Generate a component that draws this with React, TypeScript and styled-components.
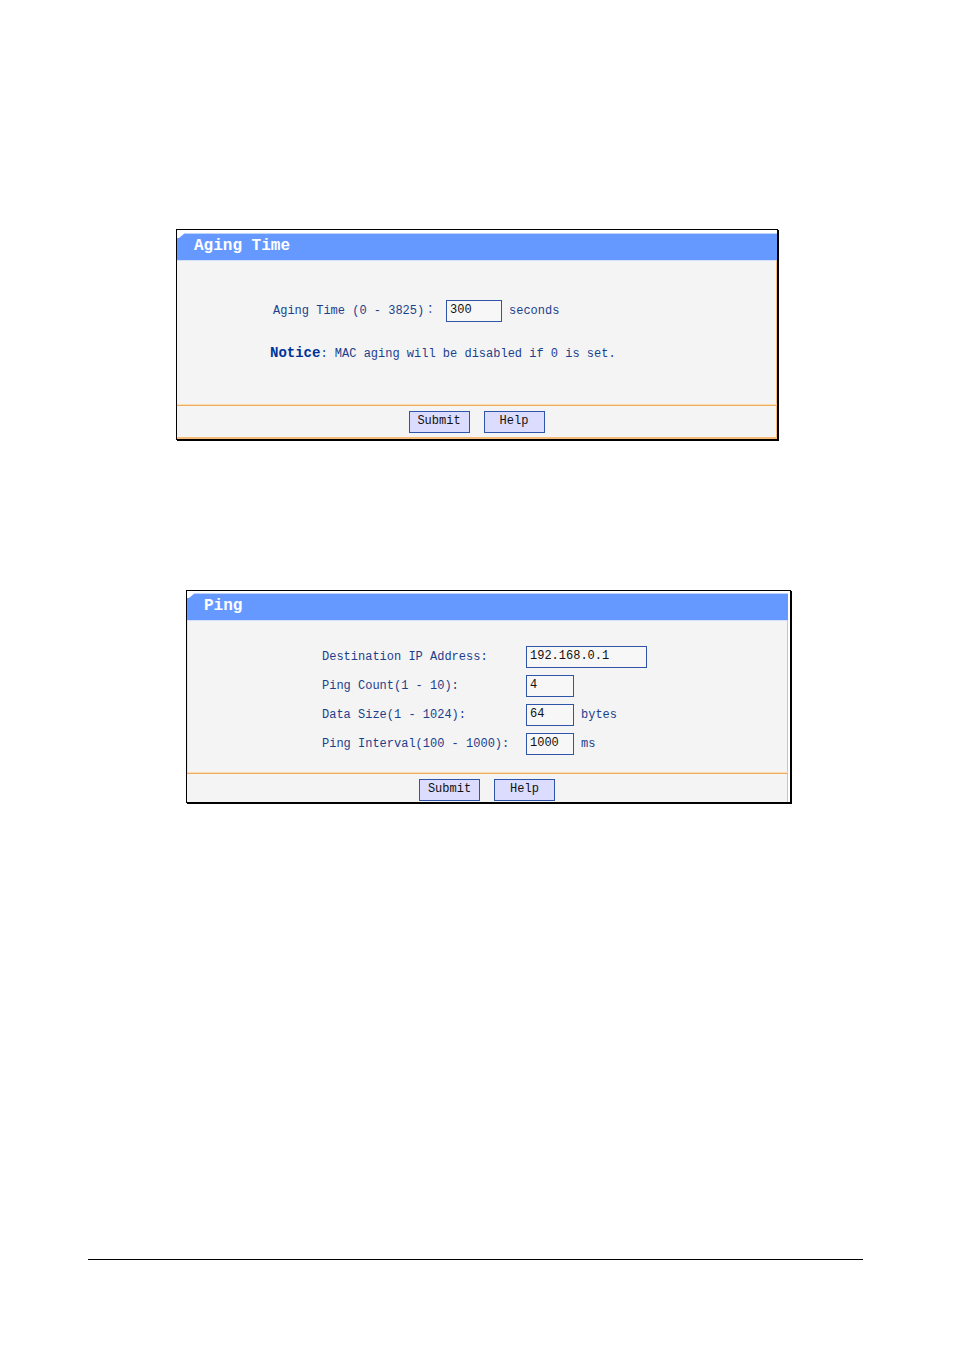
import React from "react";
import styled, { createGlobalStyle } from "styled-components";

const GlobalStyle = createGlobalStyle`
  *, *::before, *::after { box-sizing: border-box; }
  body {
    margin: 0;
    background: #fff;
    color: #1c3f8c;
    font-family: "Liberation Mono", "Noto Sans CJK JP", monospace;
    font-size: 12px;
    line-height: 22px;
  }
`;

const Page = styled.main`
  padding: 229px 91px 90px 88px;
`;

const Panel = styled.form`
  margin: 0 85px 0 88px;
  padding-top: 3px;
  background: #fff;
  border: 1px solid #000;
  box-shadow: 1px 1px 0 #000;
`;

const PingPanel = styled(Panel)`
  margin: 150px 72px 0 98px;
  padding: 2px 2px 0 0;
`;

const PanelTitle = styled.h2`
  margin: 0;
  padding-left: 17px;
  height: 27px;
  border-top: 1px solid #bfd5ff;
  background: #6699ff;
  clip-path: polygon(0 5px, 2px 5px, 8px 0, 100% 0, 100% 100%, 0 100%);
  color: #fff;
  font-size: 16px;
  font-weight: bold;
  line-height: 24px;
`;

const PanelBody = styled.div<{ $leftEdge?: boolean }>`
  display: flex;
  flex-direction: column;
  border-top: 1px solid #d3e1fb;
  border-right: 1px solid #f8bd74;
  border-left: ${(p) => (p.$leftEdge ? "1px solid #fde0b8" : "0")};
  background: #f4f4f4;
`;

const AgingBody = styled(PanelBody)`
  gap: 20px;
  padding: 39px 0 39px 93px;
`;

const PingBody = styled(PanelBody)`
  gap: 7px;
  padding: 25px 0 17px 134px;
`;

const AgingRow = styled.div`
  display: flex;
  align-items: center;
  padding-left: 3px;
  white-space: pre;
`;

const AgingLabel = styled.label`
  width: 173px;
`;

const PingRow = styled.div`
  display: grid;
  grid-template-columns: 204px auto 1fr;
  align-items: center;
  white-space: pre;
`;

const TextBox = styled.input<{ $width: number }>`
  width: ${(p) => p.$width}px;
  height: 22px;
  margin: 0;
  padding: 0 3px 2px;
  border: 1px solid #2f54a8;
  border-radius: 0;
  background: #f7f7f7;
  color: #111;
  font: inherit;
`;

const Unit = styled.span`
  padding-left: 7px;
`;

const Notice = styled.p`
  margin: 0;
`;

const NoticeLead = styled.strong`
  color: #003399;
  font-size: 14px;
`;

const Actions = styled.div<{ $bottomEdge?: boolean }>`
  display: flex;
  justify-content: center;
  gap: 14px;
  padding: 5px 0 ${(p) => (p.$bottomEdge ? 4 : 1)}px;
  border-right: 1px solid #f8bd74;
  border-bottom: ${(p) => (p.$bottomEdge ? "2px solid #f5bb78" : "0")};
  background: #f4f4f4;
`;

const Divider = styled.hr`
  height: 2px;
  margin: 0;
  border: 0;
  border-top: 1px solid #fcdcb0;
  background: #efab62;
`;

const Button = styled.button`
  width: 61px;
  height: 22px;
  padding: 0 0 2px;
  border: 1px solid #2f54a8;
  border-radius: 0;
  background: #dcdcff;
  color: #111;
  font: inherit;
  line-height: 18px;
  cursor: pointer;
`;

const PageRule = styled.hr`
  height: 1px;
  margin: 456px 0 0;
  border: 0;
  background: #000;
`;

const pingFields = [
  { id: "destination", label: "Destination IP Address:", value: "192.168.0.1", width: 121, unit: "" },
  { id: "count", label: "Ping Count(1 - 10):", value: "4", width: 48, unit: "" },
  { id: "size", label: "Data Size(1 - 1024):", value: "64", width: 48, unit: "bytes" },
  { id: "interval", label: "Ping Interval(100 - 1000):", value: "1000", width: 48, unit: "ms" },
];

const stay = (event: React.FormEvent) => event.preventDefault();

export default function App() {
  return (
    <>
      <GlobalStyle />
      <Page>
        <Panel onSubmit={stay}>
          <PanelTitle>Aging Time</PanelTitle>
          <AgingBody>
            <AgingRow>
              <AgingLabel htmlFor="aging">Aging Time (0 - 3825)：</AgingLabel>
              <TextBox id="aging" type="text" defaultValue="300" $width={56} />
              <Unit>seconds</Unit>
            </AgingRow>
            <Notice>
              <NoticeLead>Notice</NoticeLead>: MAC aging will be disabled if 0 is set.
            </Notice>
          </AgingBody>
          <Divider />
          <Actions $bottomEdge>
            <Button type="submit">Submit</Button>
            <Button type="button">Help</Button>
          </Actions>
        </Panel>

        <PingPanel onSubmit={stay}>
          <PanelTitle>Ping</PanelTitle>
          <PingBody $leftEdge>
            {pingFields.map((field) => (
              <PingRow key={field.id}>
                <label htmlFor={field.id}>{field.label}</label>
                <TextBox id={field.id} type="text" defaultValue={field.value} $width={field.width} />
                {field.unit && <Unit>{field.unit}</Unit>}
              </PingRow>
            ))}
          </PingBody>
          <Divider />
          <Actions>
            <Button type="submit">Submit</Button>
            <Button type="button">Help</Button>
          </Actions>
        </PingPanel>

        <PageRule />
      </Page>
    </>
  );
}
